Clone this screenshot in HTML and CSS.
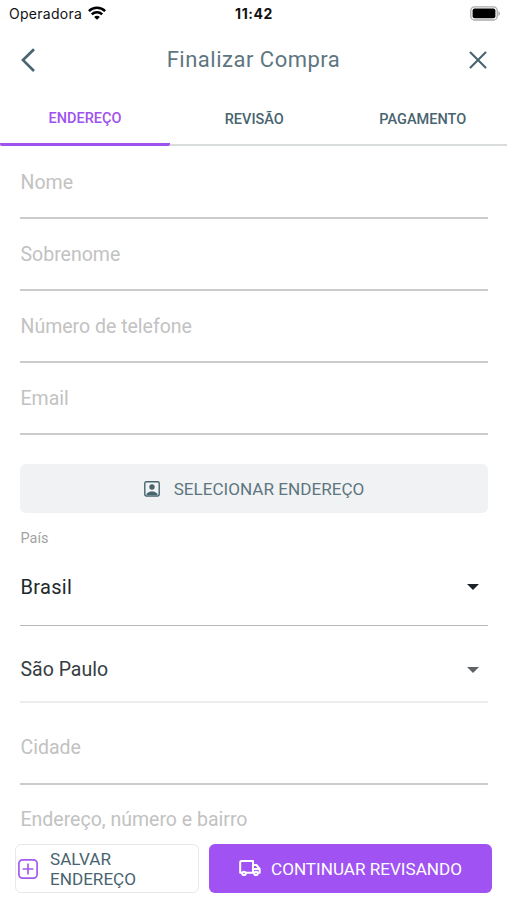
FILE: index.html
```html
<!DOCTYPE html>
<html lang="pt-BR">
<head>
<meta charset="utf-8">
<title>Finalizar Compra</title>
<link rel="stylesheet" href="styles.css">
</head>
<body>
<div class="status">
  <div class="carrier"><span>Operadora</span>
    <svg width="18" height="14" viewBox="0 0 18 14" fill="none" stroke="#000" stroke-width="2.5"><path d="M.9 5.1a11.5 11.5 0 0 1 16.2 0M3.8 8.4a7.4 7.4 0 0 1 10.4 0"/><path d="M9 13.8 6.1 11.1a4.1 4.1 0 0 1 5.8 0z" fill="#000" stroke="none"/></svg>
  </div>
  <span class="time">11:42</span>
  <svg class="battery" width="31" height="15" viewBox="0 0 31 15"><rect x=".8" y=".8" width="26.4" height="13.2" rx="3.8" fill="#fff" stroke="#aaa" stroke-width="1.3"/><rect x="2.6" y="2.6" width="22.8" height="9.6" rx="2" fill="#000"/><path d="M28.4 5v5q1.6-.7 1.6-2.5T28.4 5" fill="#aaa"/></svg>
</div>
<header class="header">
  <svg width="16" height="26" viewBox="0 0 16 26" fill="none" stroke="#48646f" stroke-width="2.7"><path d="m14 2.2-11 10.9 11 10.9"/></svg>
  <h1>Finalizar Compra</h1>
  <svg width="18" height="18" viewBox="0 0 18 18" fill="none" stroke="#48646f" stroke-width="2.1" stroke-linecap="round"><path d="m1.5 1.5 15 15m0-15-15 15"/></svg>
</header>
<nav class="tabs">
  <div class="tab active"><span>ENDEREÇO</span></div>
  <div class="tab"><span>REVISÃO</span></div>
  <div class="tab"><span>PAGAMENTO</span></div>
</nav>
<main class="form">
  <div class="field"><span>Nome</span></div>
  <div class="field"><span>Sobrenome</span></div>
  <div class="field"><span>Número de telefone</span></div>
  <div class="field"><span>Email</span></div>
  <div class="select-address">
    <svg width="16" height="16" viewBox="0 0 16 16"><rect x=".8" y=".8" width="14.4" height="14.2" rx="1.4" fill="none" stroke="#48646f" stroke-width="1.4"/><circle cx="8" cy="6" r="2.7" fill="#48646f"/><path d="M2.5 14v-1.2q2.2-2.6 5.5-2.6t5.5 2.6V14z" fill="#48646f"/></svg>
    <span>SELECIONAR ENDEREÇO</span>
  </div>
  <div class="label"><span>País</span></div>
  <div class="picker country"><span>Brasil</span><svg width="12" height="6" viewBox="0 0 12 6"><path d="M0 0h12L6 6z" fill="#1c2225"/></svg></div>
  <div class="picker state"><span>São Paulo</span><svg width="12" height="6" viewBox="0 0 12 6"><path d="M0 0h12L6 6z" fill="#606365"/></svg></div>
  <div class="field city"><span>Cidade</span></div>
  <div class="street"><span>Endereço, número e bairro</span></div>
</main>
<footer class="actions">
  <div class="save">
    <svg width="20" height="20" viewBox="0 0 20 20" fill="none" stroke="#a35bf0" stroke-width="1.7" stroke-linecap="round"><rect x=".9" y=".9" width="18.2" height="18.2" rx="3.6"/><path d="M10 5.2v9.6M5.2 10h9.6"/></svg>
    <span>SALVAR<br>ENDEREÇO</span>
  </div>
  <div class="continue">
    <svg width="22" height="17" viewBox="0 0 22 17" fill="none" stroke="#fff" stroke-width="2" stroke-linejoin="round"><path d="M3 12.8H1.2V2.2Q1.2 1 2.4 1H14v11.8H7M14 5h3.4l3.3 4v3.8h-1.5M14 9h6.7M14 12.8h1"/><circle cx="5" cy="13.4" r="1.7"/><circle cx="17" cy="13.4" r="1.7"/></svg>
    <span>CONTINUAR REVISANDO</span>
  </div>
</footer>
</body>
</html>
```
FILE: styles.css
```css
* { box-sizing: border-box; }
body {
  margin: 0;
  width: 507px;
  height: 900px;
  overflow: hidden;
  background: #fff;
  color: #48646f;
  font-family: Roboto, "Liberation Sans", sans-serif;
  white-space: nowrap;
}
svg { display: block; flex: none; }
.status {
  height: 27px;
  padding: 0 6px 0 9px;
  display: grid;
  grid-template-columns: 1fr auto 1fr;
  align-items: center;
  font: 14px/20px Inter, sans-serif;
  color: #111;
}
.carrier { display: flex; align-items: center; gap: 6px; letter-spacing: .28px; }
.carrier svg { margin-top: -2px; }
.time { font-weight: 700; letter-spacing: .55px; margin-left: -2px; }
.battery { justify-self: end; }
.header {
  height: 65px;
  padding: 0 20px;
  display: flex;
  align-items: center;
  justify-content: space-between;
}
h1 {
  margin: 0;
  padding: 1px 0 0 2px;
  font-size: 22px;
  line-height: 28px;
  font-weight: 400;
  letter-spacing: .5px;
  color: #5e7680;
}
.tabs { display: flex; height: 54px; border-bottom: 2px solid #d9dcdd; }
.tab {
  flex: 1;
  height: 54px;
  padding-top: 19px;
  text-align: center;
  font-size: 14.5px;
  line-height: 18px;
  font-weight: 500;
}
.active { flex: 0 0 170px; padding-top: 18px; color: #a052ee; border-bottom: 3.5px solid #a052ee; border-radius: 2px; }
.form { padding: 1px 19px 0 20px; }
.field {
  height: 72px;
  padding: 23px 0 0 .5px;
  border-bottom: 2px solid #cbcbcb;
  font-size: 19.5px;
  line-height: 26px;
  color: #c2c2c2;
}
.select-address {
  margin-top: 29px;
  height: 49px;
  border-radius: 6px;
  background: #f0f2f4;
  display: flex;
  align-items: center;
  justify-content: center;
  gap: 14px;
  font-size: 17.1px;
  color: #5e7680;
}
.label { padding: 16px 0 0 .5px; font-size: 14.5px; line-height: 20px; color: #a3a3a3; }
.picker {
  display: flex;
  align-items: center;
  justify-content: space-between;
  padding-right: 9px;
  padding-left: .5px;
  font-size: 19.5px;
}
.country { height: 77px; border-bottom: 1px solid #b8b8b8; color: #20282c; }
.country span { font-size: 20px; letter-spacing: .3px; }
.state { height: 77px; padding-top: 12px; border-bottom: 2px solid #ececec; color: #363d41; }
.city { height: 82px; padding-top: 32px; }
.street { padding: 22px 0 0 .5px; height: 59px; font-size: 19.5px; line-height: 26px; color: #c2c2c2; }
.actions { display: flex; gap: 10px; padding: 0 15px; font-size: 17.1px; }
.save {
  width: 184px;
  height: 49px;
  padding-left: 2px;
  border: 1px solid #e6e8e9;
  border-radius: 6px;
  display: flex;
  align-items: center;
  gap: 12px;
  line-height: 20px;
}
.continue {
  flex: 1;
  height: 49px;
  border-radius: 6px;
  background: #a052f2;
  color: #fff;
  display: flex;
  align-items: center;
  justify-content: center;
  gap: 10px;
}
```
